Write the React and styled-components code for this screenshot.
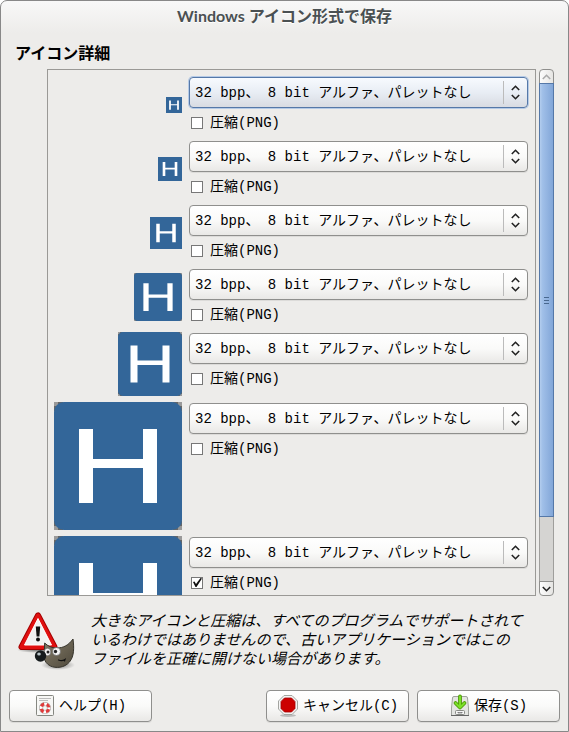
import React, { useState } from 'react';
import styled, { createGlobalStyle } from 'styled-components';

const sizes = [
  { id: 'i16', px: 16 },
  { id: 'i24', px: 24 },
  { id: 'i32', px: 32 },
  { id: 'i48', px: 48 },
  { id: 'i64', px: 64 },
  { id: 'i128', px: 128 },
  { id: 'i256', px: 128, compressed: true },
];

const depths = [
  '32 bpp、 8 bit アルファ、パレットなし',
  '24 bpp、 1 bit アルファ、パレットなし',
  '8 bpp、 1 bit アルファ、256 色パレット',
];

function Preview({ size }) {
  return (
    <svg width={size} height={size} viewBox="0 0 128 128" aria-hidden="true">
      {size >= 48 && (
        <>
          <rect width="128" height="128" fill="#999" />
          <path d="M0 4h4V0h5v9H0zM119 0h5v4h4v5h-9zM0 119h9v9H4v-4H0zM119 119h9v5h-4v4h-5z" fill="#666" />
        </>
      )}
      <rect width="128" height="128" rx={size >= 48 ? 10 : 0} fill="#336699" />
      <path d="M25 27h14v30h50V27h14v74H89V66H39v35H25z" fill="#fff" />
    </svg>
  );
}

function WarningIcon() {
  return (
    <svg width="60" height="60" viewBox="0 -2 60 60" aria-hidden="true">
      <defs>
        <linearGradient id="fur" x1="0" y1="0" x2="1" y2="1">
          <stop offset="0" stopColor="#857d69" />
          <stop offset="1" stopColor="#4e483b" />
        </linearGradient>
        <radialGradient id="shade">
          <stop offset="0" stopColor="#000" stopOpacity=".5" />
          <stop offset="1" stopColor="#000" stopOpacity="0" />
        </radialGradient>
      </defs>
      <ellipse cx="43" cy="53" rx="17" ry="5" fill="url(#shade)" />
      <ellipse cx="22" cy="38" rx="20" ry="3" fill="url(#shade)" />
      <path d="M23 3.500 6.500 35h33z" fill="#fff" stroke="#a40000" strokeWidth="6" strokeLinejoin="round" />
      <path d="M23 3.500 6.500 35h33z" fill="#f8f8f8" stroke="#e01010" strokeWidth="4" strokeLinejoin="round" />
      <path d="M23 6.500 9.500 33h27z" fill="#f2f2f2" stroke="#fff" strokeWidth="1" />
      <path d="M20.800 14.500h4.400l-.8 10h-2.800z" fill="#111" />
      <circle cx="23" cy="27.500" r="2" fill="#111" />
      <path d="M29.700 31c3 3 7 5 12 5 7 0 12-3 16.300-9 1 8 1.500 17-3.500 23-5 6-14 6.500-19 4-4-2-6-5-6.500-9z" fill="url(#fur)" stroke="#35332b" strokeWidth="1" />
      <ellipse cx="32.500" cy="40" rx="3.300" ry="3.800" fill="#f4f4f4" stroke="#555" strokeWidth=".6" />
      <ellipse cx="41.500" cy="39.500" rx="4" ry="4" fill="#f4f4f4" stroke="#555" strokeWidth=".6" />
      <circle cx="33" cy="40" r="1.500" fill="#222" />
      <circle cx="40.500" cy="39.500" r="1.700" fill="#222" />
      <ellipse cx="25.500" cy="44" rx="5.700" ry="5.700" fill="#151a1c" />
      <ellipse cx="24" cy="42" rx="1.800" ry="1.500" fill="#b9c4c9" />
      <path d="M43.500 48c2 .8 4.500.8 6.500-.5l-.5 1.500" fill="none" stroke="#111" strokeWidth="1.200" strokeLinecap="round" />
    </svg>
  );
}

function HelpIcon() {
  return (
    <svg width="20" height="24" viewBox="0 0 20 24" aria-hidden="true">
      <rect x="1.500" y="1.500" width="17" height="20" rx="1" fill="#f7f7f5" stroke="#858781" />
      <path d="M4 4.500h12M4 6.500h9" stroke="#bbb" />
      <circle cx="10" cy="14" r="4" fill="none" stroke="#999" strokeWidth="4" />
      <circle cx="10" cy="14" r="4" fill="none" stroke="#fff" strokeWidth="3" />
      <circle cx="10" cy="14" r="4" fill="none" stroke="#df3a3a" strokeWidth="3" strokeDasharray="3.700 2.583" strokeDashoffset="-1.300" />
    </svg>
  );
}

function CancelIcon() {
  return (
    <svg width="22" height="24" viewBox="0 0 22 24" aria-hidden="true">
      <ellipse cx="11" cy="21.500" rx="8" ry="1.500" fill="#bbb" />
      <path d="M7 1.500h8l5.500 5.500v8L15 20.500H7L1.500 15V7z" fill="#f4f4f4" stroke="#a3a5a0" />
      <path d="M7.500 4h7L18 7.500v7L14.500 18h-7L4 14.500v-7z" fill="#cc0000" stroke="#a40000" strokeWidth=".8" />
    </svg>
  );
}

function SaveIcon() {
  return (
    <svg width="20" height="24" viewBox="0 0 20 24" aria-hidden="true">
      <path d="M4 2.500h12q1.500 0 1.500 1.500l1 10v7.500h-17V14l1-10q0-1.500 1.500-1.500z" fill="#e4e5e2" stroke="#a0a29d" />
      <path d="M1 21.500h18" stroke="#666" strokeWidth="1" />
      <rect x="5.500" y="16.500" width="9" height="4" rx="1" fill="#f5f5f5" stroke="#888a85" />
      <path d="M8 18v.8h4V18" fill="none" stroke="#666" />
      <g fill="none" strokeLinecap="round" strokeLinejoin="round">
        <path d="M10 2.500V13M5.500 9l4.500 4.500L14.500 9" stroke="#4e9a06" strokeWidth="3.800" />
        <path d="M10 2.500V13M5.500 9l4.500 4.500L14.500 9" stroke="#7be02a" strokeWidth="2" />
      </g>
    </svg>
  );
}

function Chevron({ up, color = '#222' }) {
  return (
    <svg width="9" height="6" viewBox="0 0 9 6" aria-hidden="true">
      <path d={up ? 'M.8 5 4.500 1.300 8.200 5' : 'M.8 1 4.500 4.700 8.200 1'} fill="none" stroke={color} strokeWidth="1.600" />
    </svg>
  );
}

function App() {
  const [checked, setChecked] = useState(
    Object.fromEntries(sizes.map((s) => [s.id, Boolean(s.compressed)]))
  );

  const toggle = (id) => setChecked({ ...checked, [id]: !checked[id] });

  return (
    <Dialog>
      <GlobalStyle />
      <TitleBar>Windows アイコン形式で保存</TitleBar>
      <Content>
        <Heading>アイコン詳細</Heading>
        <ScrolledWindow>
          <List>
            {sizes.map((s, i) => (
              <Row key={s.id}>
                <PreviewCell>
                  <Preview size={s.px} />
                </PreviewCell>
                <Options>
                  <Combo $focused={i === 0}>
                    <select aria-label="色深度">
                      {depths.map((d) => (
                        <option key={d}>{d}</option>
                      ))}
                    </select>
                    <Arrows>
                      <Chevron up />
                      <Chevron />
                    </Arrows>
                  </Combo>
                  <CheckLabel>
                    <input type="checkbox" checked={checked[s.id]} onChange={() => toggle(s.id)} />
                    圧縮(PNG)
                  </CheckLabel>
                </Options>
              </Row>
            ))}
          </List>
          <Scrollbar>
            <Stepper $top aria-label="上へ">
              <Chevron up color="#aaa" />
            </Stepper>
            <Trough>
              <Thumb>
                <Grip />
              </Thumb>
            </Trough>
            <Stepper aria-label="下へ">
              <Chevron />
            </Stepper>
          </Scrollbar>
        </ScrolledWindow>
        <Warning>
          <WarningIcon />
          <Message>
            大きなアイコンと圧縮は、すべてのプログラムでサポートされて
            <br />
            いるわけではありませんので、古いアプリケーションではこの
            <br />
            ファイルを正確に開けない場合があります。
          </Message>
        </Warning>
      </Content>
      <Actions>
        <Button $first>
          <HelpIcon />
          ヘルプ(H)
        </Button>
        <Button>
          <CancelIcon />
          キャンセル(C)
        </Button>
        <Button>
          <SaveIcon />
          保存(S)
        </Button>
      </Actions>
    </Dialog>
  );
}

const GlobalStyle = createGlobalStyle`
  * {
    box-sizing: border-box;
  }
  body {
    margin: 0;
    background: #fff;
    color: #000;
    font: 14px/20px 'Liberation Mono', 'Noto Sans CJK JP', monospace;
  }
  button, select, input {
    font: inherit;
    color: inherit;
    margin: 0;
  }
  svg {
    display: block;
    flex: none;
  }
`;

const Dialog = styled.main`
  display: flex;
  flex-direction: column;
  height: 100vh;
  border: 1px solid #888;
  border-radius: 7px 7px 0 0;
  background: linear-gradient(#f8f8f8, #edecea 32px);
`;

const TitleBar = styled.header`
  padding: 3px 0 5px;
  text-align: center;
  font: bold 16px/24px Lato, 'Noto Sans CJK JP', sans-serif;
  color: #4a5052;
  text-shadow: 0 1px 0 #fff;
`;

const Content = styled.section`
  flex: 1;
  min-height: 0;
  display: flex;
  flex-direction: column;
  padding: 7px 14px 0;
`;

const Heading = styled.h1`
  margin: 0 0 5px;
  font: bold 16px/24px 'Noto Sans CJK JP', sans-serif;
`;

const ScrolledWindow = styled.div`
  flex: 1;
  min-height: 0;
  display: flex;
  gap: 3px;
  padding-left: 32px;
`;

const List = styled.div`
  flex: 1;
  overflow: hidden;
  padding: 6px 7px 6px 6px;
  border: 1px solid #9a9996;
`;

const Row = styled.div`
  display: grid;
  grid-template-columns: 128px 1fr;
  gap: 7px;
  min-height: 58px;
  margin-bottom: 6px;
`;

const PreviewCell = styled.div`
  display: flex;
  align-items: center;
  justify-content: flex-end;
`;

const Options = styled.div`
  display: flex;
  flex-direction: column;
  padding-top: 1px;
`;

const Combo = styled.div`
  display: grid;
  grid-template-columns: 1fr 24px;
  height: 31px;
  border: 1px solid ${(p) => (p.$focused ? '#5578a8' : '#8f8f8d')};
  border-radius: 4px;
  box-shadow: ${(p) => (p.$focused ? '0 0 0 1px #b5cae6' : '0 1px 0 #dcdbd9')};
  background: ${(p) =>
    p.$focused
      ? 'linear-gradient(#f7fafe, #e8edf4 50%, #d8dbe2)'
      : 'linear-gradient(#fff, #fafaf9 50%, #e9e8e6)'};

  select {
    grid-area: 1 / 1 / 2 / 3;
    appearance: none;
    border: 0;
    outline: 0;
    padding: 0 24px 0 5px;
    background: none;
  }
`;

const Arrows = styled.span`
  grid-area: 1 / 2;
  display: flex;
  flex-direction: column;
  align-items: center;
  justify-content: center;
  gap: 3px;
  margin: 3px 0;
  border-left: 1px solid #bbb;
  pointer-events: none;
`;

const CheckLabel = styled.label`
  display: flex;
  align-items: center;
  gap: 7px;
  height: 26px;
  padding: 3px 0 0 2px;

  input {
    appearance: none;
    display: grid;
    place-items: center;
    width: 12px;
    height: 12px;
    border: 1px solid #777;
    background: #fff;
  }
  input:checked::after {
    content: '';
    width: 10px;
    height: 10px;
    background: #111;
    clip-path: polygon(10% 45%, 25% 40%, 40% 65%, 85% 5%, 100% 10%, 45% 95%, 35% 95%);
  }
`;

const Scrollbar = styled.div`
  display: flex;
  flex-direction: column;
  width: 15px;
`;

const Stepper = styled.button`
  display: flex;
  align-items: center;
  justify-content: center;
  height: 15px;
  padding: 0;
  border: 1px solid #8f8f8d;
  border-radius: ${(p) => (p.$top ? '4px 4px 0 0' : '0 0 4px 4px')};
  background: linear-gradient(to right, #fcfcfc, #e6e5e3);
`;

const Trough = styled.div`
  flex: 1;
  border: solid #9f9e9c;
  border-width: 0 1px;
  margin: -1px 0;
  background: #d5d4d2;
`;

const Thumb = styled.div`
  display: flex;
  align-items: center;
  justify-content: center;
  height: 87%;
  margin: 0 -1px;
  border: 1px solid #5578a8;
  background: linear-gradient(to right, #b3cdee, #a0bfe8 20%, #82a6d8);
`;

const Grip = styled.span`
  width: 5px;
  height: 7px;
  border: solid #49688f;
  border-width: 1px 0;
  background: linear-gradient(transparent 2px, #49688f 2px, #49688f 3px, transparent 3px);
`;

const Warning = styled.div`
  display: flex;
  gap: 16px;
  padding: 14px 0 20px;
`;

const Message = styled.p`
  margin: 0;
  font: italic 15px/19px 'Noto Sans CJK JP', sans-serif;
  white-space: nowrap;
`;

const Actions = styled.footer`
  display: flex;
  justify-content: flex-end;
  gap: 8px;
  padding: 0 8px 9px;
`;

const Button = styled.button`
  display: flex;
  align-items: center;
  justify-content: center;
  gap: 4px;
  width: 143px;
  height: 32px;
  margin-right: ${(p) => (p.$first ? 'auto' : '0')};
  padding: 0;
  border: 1px solid #8f8f8d;
  border-radius: 4px;
  box-shadow: 0 1px 0 #dcdbd9;
  background: linear-gradient(#fff, #fafaf9 50%, #e9e8e6);
`;

export default App;
